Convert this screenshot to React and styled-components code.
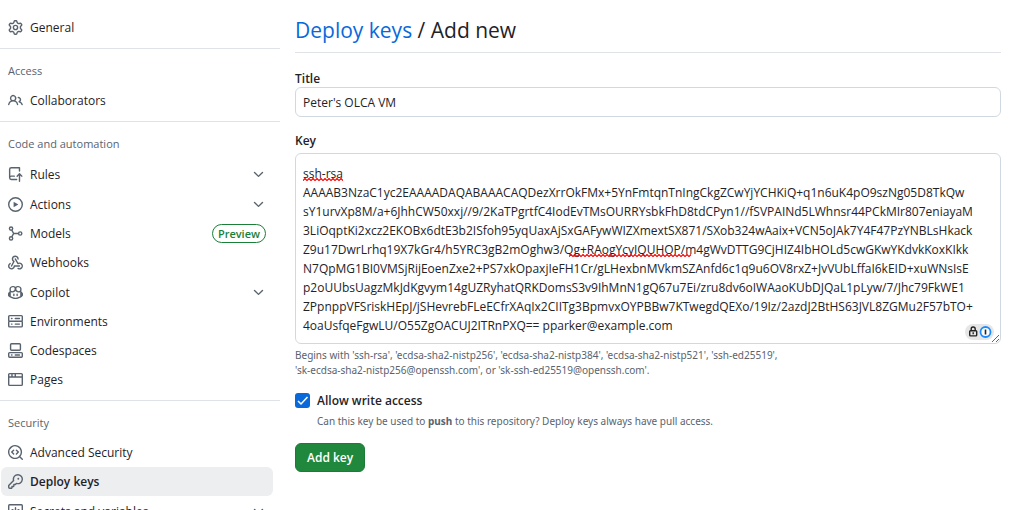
import styled, { createGlobalStyle } from 'styled-components';

const GlobalStyle = createGlobalStyle`
	* {
		box-sizing: border-box;
	}

	body {
		margin: 0;
		background-color: #ffffff;
		color: #1f2328;
		font-family: 'Segoe UI', 'Open Sans', 'Noto Sans', sans-serif;
		font-size: 12px;
		line-height: 19px;
	}

	button,
	input,
	textarea {
		color: inherit;
		font: inherit;
	}
`;

const Page = styled.div`
	display: flex;
	height: 100vh;
	overflow: hidden;
`;

const Sidebar = styled.nav`
	flex: 0 0 280px;
	padding-top: 13px;
`;

const Group = styled.section`
	& + & {
		margin-top: 6px;
		padding-top: 13px;
		border-top: 1px solid #dfe3e8;
	}
`;

const GroupTitle = styled.h3`
	margin: 0 8px 7px;
	color: #59636e;
	font-size: 11px;
	font-weight: 500;
	line-height: 17px;
`;

const List = styled.ul`
	margin: 0;
	padding: 0 7px 0 1px;
	list-style: none;
`;

const Item = styled.a`
	display: flex;
	align-items: center;
	gap: 7px;
	width: 100%;
	min-height: 29px;
	padding: 0 7px;
	border: 0;
	border-radius: 6px;
	background-color: ${(props) => (props.$active ? '#eceef0' : 'transparent')};
	color: #1f2328;
	font-weight: ${(props) => (props.$active ? 600 : 400)};
	text-align: left;
	text-decoration: none;
`;

const ExpandableItem = styled(Item)`
	min-height: 30px;
	cursor: pointer;
`;

const ItemLabel = styled.span`
	flex: 1;
`;

const Badge = styled.span`
	padding: 0 5px;
	border: 1px solid #1a7f37;
	border-radius: 10px;
	color: #1a7f37;
	font-size: 11px;
	font-weight: 600;
	line-height: 17px;
`;

const Icon = styled.svg`
	flex: none;
	width: 15px;
	height: 15px;
	fill: #59636e;
`;

const Main = styled.main`
	flex: 1;
	min-width: 0;
	padding: 14px 23px 0 15px;
`;

const Heading = styled.h2`
	margin: 0 0 17px;
	padding-bottom: 6px;
	border-bottom: 1px solid #dfe3e8;
	font-size: 21px;
	font-weight: 400;
	line-height: 32px;
`;

const HeadingLink = styled.a`
	color: #0969da;
	text-decoration: none;
`;

const Label = styled.label`
	display: block;
	font-weight: 600;
	line-height: 17px;
`;

const TextInput = styled.input`
	display: block;
	width: 100%;
	height: 30px;
	margin-bottom: 15px;
	padding: 0 7px;
	border: 1px solid #d1d9e0;
	border-radius: 6px;
	background-color: #ffffff;
`;

const KeyBox = styled.div`
	position: relative;
	margin: 4px 0;
`;

const KeyArea = styled.textarea`
	display: block;
	width: 100%;
	padding: 10px 7px 8px;
	border: 1px solid #d1d9e0;
	border-radius: 6px;
	background-color: #ffffff;
	line-height: 19px;
	white-space: pre;
	overflow: hidden;
	resize: vertical;
`;

const Squiggle = styled.svg`
	position: absolute;
	top: ${(props) => 11 + props.$line * 19 + 14}px;
	left: ${(props) => props.$left}px;
	width: ${(props) => props.$width}px;
	height: 3px;
	pointer-events: none;
`;

const VaultPill = styled.span`
	position: absolute;
	right: 7px;
	bottom: 4px;
	display: flex;
	align-items: center;
	width: 29px;
	height: 16px;
	border-radius: 8px;
	background-color: #e6e6e6;
`;

const Help = styled.p`
	margin: 0;
	color: #59636e;
	font-family: 'Segoe UI', 'Noto Sans', sans-serif;
	font-size: 10px;
	line-height: 15px;
`;

const CheckRow = styled.div`
	display: flex;
	align-items: center;
	gap: 7px;
	margin-top: 14px;
`;

const CheckBox = styled.span`
	display: grid;

	> * {
		grid-area: 1 / 1;
	}
`;

const CheckInput = styled.input`
	width: 15px;
	height: 15px;
	margin: 0;
	border-radius: 3px;
	background-color: #0969da;
	appearance: none;
`;

const Tick = styled.svg`
	width: 15px;
	height: 15px;
	fill: none;
	stroke: #ffffff;
	pointer-events: none;
`;

const CheckHelp = styled(Help)`
	margin: 5px 0 14px 22px;
`;

const SubmitButton = styled.button`
	height: 29px;
	padding: 0 11px;
	border: 1px solid #1c7b37;
	border-radius: 6px;
	background-color: #1f883d;
	color: #ffffff;
	font-weight: 600;
`;

const icons = {
	gear: 'M8 0a8.2 8.2 0 0 1 .701.031C9.444.095 9.99.645 10.16 1.29l.288 1.107c.018.066.079.158.212.224.231.114.454.243.668.386.123.082.233.09.299.071l1.103-.303c.644-.176 1.392.021 1.82.63.27.385.506.792.704 1.218.315.675.111 1.422-.364 1.891l-.814.806c-.049.048-.098.147-.088.294.016.257.016.515 0 .772-.01.147.038.246.088.294l.814.806c.475.469.679 1.216.364 1.891a7.977 7.977 0 0 1-.704 1.217c-.428.61-1.176.807-1.82.63l-1.102-.302c-.067-.019-.177-.011-.3.071a5.909 5.909 0 0 1-.668.386c-.133.066-.194.158-.211.224l-.29 1.106c-.168.646-.715 1.196-1.458 1.26a8.006 8.006 0 0 1-1.402 0c-.743-.064-1.289-.614-1.458-1.26l-.289-1.106c-.018-.066-.079-.158-.212-.224a5.738 5.738 0 0 1-.668-.386c-.123-.082-.233-.09-.299-.071l-1.103.303c-.644.176-1.392-.021-1.82-.63a8.12 8.12 0 0 1-.704-1.218c-.315-.675-.111-1.422.363-1.891l.815-.806c.05-.048.098-.147.088-.294a6.214 6.214 0 0 1 0-.772c.01-.147-.038-.246-.088-.294l-.815-.806C.635 6.045.431 5.298.746 4.623a7.92 7.92 0 0 1 .704-1.217c.428-.61 1.176-.807 1.82-.63l1.102.302c.067.019.177.011.3-.071.214-.143.437-.272.668-.386.133-.066.194-.158.211-.224l.29-1.106C6.009.645 6.556.095 7.299.03 7.53.01 7.764 0 8 0Zm-.571 1.525c-.036.003-.108.036-.137.146l-.289 1.105c-.147.561-.549.967-.998 1.189-.173.086-.34.183-.5.29-.417.278-.97.423-1.529.27l-1.103-.303c-.109-.03-.175.016-.195.045-.22.312-.412.644-.573.99-.014.031-.021.11.059.19l.815.806c.411.406.562.957.53 1.456a4.709 4.709 0 0 0 0 .582c.032.499-.119 1.05-.53 1.456l-.815.806c-.081.08-.073.159-.059.19.162.346.353.677.573.989.02.03.085.076.195.046l1.102-.303c.56-.153 1.113-.008 1.53.27.161.107.328.204.501.29.447.222.85.629.997 1.189l.289 1.105c.029.109.101.143.137.146a6.6 6.6 0 0 0 1.142 0c.036-.003.108-.036.137-.146l.289-1.105c.147-.561.549-.967.998-1.189.173-.086.34-.183.5-.29.417-.278.97-.423 1.529-.27l1.103.303c.109.029.175-.016.195-.045.22-.313.411-.644.573-.99.014-.031.021-.11-.059-.19l-.815-.806c-.411-.406-.562-.957-.53-1.456a4.709 4.709 0 0 0 0-.582c-.032-.499.119-1.05.53-1.456l.815-.806c.081-.08.073-.159.059-.19a6.464 6.464 0 0 0-.573-.989c-.02-.03-.085-.076-.195-.046l-1.102.303c-.56.153-1.113.008-1.53-.27a4.44 4.44 0 0 0-.501-.29c-.447-.222-.85-.629-.997-1.189l-.289-1.105c-.029-.11-.101-.143-.137-.146a6.6 6.6 0 0 0-1.142 0ZM11 8a3 3 0 1 1-6 0 3 3 0 0 1 6 0ZM9.5 8a1.5 1.5 0 1 0-3.001.001A1.5 1.5 0 0 0 9.5 8Z',
	people: 'M2 5.5a3.5 3.5 0 1 1 5.898 2.549 5.508 5.508 0 0 1 3.034 4.084.75.75 0 1 1-1.482.235 4 4 0 0 0-7.9 0 .75.75 0 0 1-1.482-.236A5.507 5.507 0 0 1 3.102 8.05 3.493 3.493 0 0 1 2 5.5ZM11 4a3.001 3.001 0 0 1 2.22 5.018 5.01 5.01 0 0 1 2.56 3.012.749.749 0 0 1-.885.954.752.752 0 0 1-.549-.514 3.507 3.507 0 0 0-2.522-2.372.75.75 0 0 1-.574-.73v-.352a.75.75 0 0 1 .416-.672A1.5 1.5 0 0 0 11 5.5.75.75 0 0 1 11 4Zm-5.5-.5a2 2 0 1 0-.001 3.999A2 2 0 0 0 5.5 3.5Z',
	push: 'M1 2.5A2.5 2.5 0 0 1 3.5 0h8.75a.75.75 0 0 1 .75.75v3.5a.75.75 0 0 1-1.5 0V1.5h-8a1 1 0 0 0-1 1v6.708A2.493 2.493 0 0 1 3.5 9h3.25a.75.75 0 0 1 0 1.5H3.5a1 1 0 0 0 0 2h5.75a.75.75 0 0 1 0 1.5H3.5A2.5 2.5 0 0 1 1 11.5Zm13.23 7.79h-.001l-1.224-1.224v6.184a.75.75 0 0 1-1.5 0V9.066L10.28 10.29a.75.75 0 0 1-1.06-1.061l2.505-2.504a.75.75 0 0 1 1.06 0L15.29 9.23a.751.751 0 0 1-.018 1.042.751.751 0 0 1-1.042.018Z',
	play: 'M8 0a8 8 0 1 1 0 16A8 8 0 0 1 8 0ZM1.5 8a6.5 6.5 0 1 0 13 0 6.5 6.5 0 0 0-13 0Zm4.879-2.773 4.264 2.559a.25.25 0 0 1 0 .428l-4.264 2.559A.25.25 0 0 1 6 10.559V5.442a.25.25 0 0 1 .379-.215Z',
	webhook: 'M5.5 4.25a2.25 2.25 0 0 1 4.5 0 .75.75 0 0 0 1.5 0 3.75 3.75 0 1 0-6.14 2.889l-2.272 4.258a.75.75 0 0 0 1.324.706L7 7.25a.75.75 0 0 0-.309-1.015A2.25 2.25 0 0 1 5.5 4.25ZM7.364 3.607a.75.75 0 0 1 1.03.257l2.608 4.349a3.75 3.75 0 1 1-.628 6.785.75.75 0 0 1 .752-1.299 2.25 2.25 0 1 0-.033-3.88.75.75 0 0 1-1.03-.256L7.107 4.636a.75.75 0 0 1 .257-1.03ZM2.9 8.776A.75.75 0 0 1 2.625 9.8 2.25 2.25 0 1 0 6 11.75a.75.75 0 0 1 .75-.751h5.5a.75.75 0 0 1 0 1.5H7.425a3.751 3.751 0 1 1-5.55-3.998.75.75 0 0 1 1.024.274Z',
	copilot: 'M7.998 15.035c-4.562 0-7.873-2.914-7.998-3.749V9.338c.085-.628.677-1.686 1.588-2.065.013-.07.024-.143.036-.218.029-.183.06-.384.126-.612-.201-.508-.254-1.084-.254-1.656 0-.87.128-1.769.693-2.484.579-.733 1.494-1.124 2.724-1.261 1.206-.134 2.262.034 2.944.765.05.053.096.108.139.165.044-.057.094-.112.143-.165.682-.731 1.738-.899 2.944-.765 1.23.137 2.145.528 2.724 1.261.566.715.693 1.614.693 2.484 0 .572-.053 1.148-.254 1.656.066.228.098.429.126.612.012.076.024.148.037.218.924.385 1.522 1.471 1.591 2.095v1.872c0 .766-3.351 3.795-8.002 3.795Zm0-1.485c2.28 0 4.584-1.11 5.002-1.433V7.862l-.023-.116c-.49.21-1.075.291-1.727.291-1.146 0-2.059-.327-2.71-.991A3.222 3.222 0 0 1 8 6.303a3.24 3.24 0 0 1-.544.743c-.65.664-1.563.991-2.71.991-.652 0-1.236-.081-1.727-.291l-.023.116v4.255c.419.323 2.722 1.433 5.002 1.433ZM6.762 2.83c-.193-.206-.637-.413-1.682-.297-1.019.113-1.479.404-1.713.7-.247.312-.369.789-.369 1.554 0 .793.129 1.171.308 1.371.162.181.519.379 1.442.379.853 0 1.339-.235 1.638-.54.315-.322.527-.827.617-1.553.117-.935-.037-1.395-.241-1.614Zm4.155-.297c-1.044-.116-1.488.091-1.681.297-.204.219-.359.679-.242 1.614.091.726.303 1.231.618 1.553.299.305.784.54 1.638.54.922 0 1.28-.198 1.442-.379.179-.2.308-.578.308-1.371 0-.765-.123-1.242-.37-1.554-.233-.296-.693-.587-1.713-.7ZM6.25 9.037a.75.75 0 0 1 .75.75v1.501a.75.75 0 0 1-1.5 0V9.787a.75.75 0 0 1 .75-.75Zm4.25.75v1.501a.75.75 0 0 1-1.5 0V9.787a.75.75 0 0 1 1.5 0Z',
	server: 'M1.75 1h12.5c.966 0 1.75.784 1.75 1.75v4c0 .372-.116.717-.314 1 .198.283.314.628.314 1v4a1.75 1.75 0 0 1-1.75 1.75H1.75A1.75 1.75 0 0 1 0 12.75v-4c0-.358.109-.707.314-1a1.739 1.739 0 0 1-.314-1v-4C0 1.784.784 1 1.75 1ZM1.5 2.75v4c0 .138.112.25.25.25h12.5a.25.25 0 0 0 .25-.25v-4a.25.25 0 0 0-.25-.25H1.75a.25.25 0 0 0-.25.25Zm.25 5.75a.25.25 0 0 0-.25.25v4c0 .138.112.25.25.25h12.5a.25.25 0 0 0 .25-.25v-4a.25.25 0 0 0-.25-.25ZM7 4.75A.75.75 0 0 1 7.75 4h4.5a.75.75 0 0 1 0 1.5h-4.5A.75.75 0 0 1 7 4.75ZM7.75 10h4.5a.75.75 0 0 1 0 1.5h-4.5a.75.75 0 0 1 0-1.5ZM3 4.75A.75.75 0 0 1 3.75 4h.5a.75.75 0 0 1 0 1.5h-.5A.75.75 0 0 1 3 4.75ZM3.75 10h.5a.75.75 0 0 1 0 1.5h-.5a.75.75 0 0 1 0-1.5Z',
	codespaces: 'M0 11.25c0-.966.784-1.75 1.75-1.75h12.5c.966 0 1.75.784 1.75 1.75v3A1.75 1.75 0 0 1 14.25 16H1.75A1.75 1.75 0 0 1 0 14.25Zm2-9.5C2 .784 2.784 0 3.75 0h8.5C13.216 0 14 .784 14 1.75v5a1.75 1.75 0 0 1-1.75 1.75h-8.5A1.75 1.75 0 0 1 2 6.75Zm1.75-.25a.25.25 0 0 0-.25.25v5c0 .138.112.25.25.25h8.5a.25.25 0 0 0 .25-.25v-5a.25.25 0 0 0-.25-.25Zm-2 9.5a.25.25 0 0 0-.25.25v3c0 .138.112.25.25.25h12.5a.25.25 0 0 0 .25-.25v-3a.25.25 0 0 0-.25-.25ZM7 12.75a.75.75 0 0 1 .75-.75h4.5a.75.75 0 0 1 0 1.5h-4.5a.75.75 0 0 1-.75-.75Zm-4 0a.75.75 0 0 1 .75-.75h.5a.75.75 0 0 1 0 1.5h-.5a.75.75 0 0 1-.75-.75Z',
	browser: 'M0 2.75C0 1.784.784 1 1.75 1h12.5c.966 0 1.75.784 1.75 1.75v10.5A1.75 1.75 0 0 1 14.25 15H1.75A1.75 1.75 0 0 1 0 13.25ZM14.5 6h-13v7.25c0 .138.112.25.25.25h12.5a.25.25 0 0 0 .25-.25Zm-6-3.5v2h6V2.75a.25.25 0 0 0-.25-.25ZM5 2.5v2h2v-2Zm-3.25 0a.25.25 0 0 0-.25.25V4.5h2v-2Z',
	codescan: 'M8.47 4.97a.75.75 0 0 0 0 1.06L9.94 7.5 8.47 8.97a.75.75 0 1 0 1.06 1.06l2-2a.75.75 0 0 0 0-1.06l-2-2a.75.75 0 0 0-1.06 0ZM6.53 6.03a.75.75 0 0 0-1.06-1.06l-2 2a.75.75 0 0 0 0 1.06l2 2a.75.75 0 1 0 1.06-1.06L5.06 7.5l1.47-1.47ZM12.246 13.307a7.501 7.501 0 1 1 1.06-1.06l2.474 2.473a.749.749 0 0 1-.326 1.275.749.749 0 0 1-.734-.215ZM1.5 7.5a6.002 6.002 0 0 0 3.608 5.504 6.002 6.002 0 0 0 6.486-1.117.748.748 0 0 1 .292-.293A6 6 0 1 0 1.5 7.5Z',
	key: 'M10.5 0a5.499 5.499 0 1 1-1.288 10.848l-.932.932a.749.749 0 0 1-.53.22H7v.75a.749.749 0 0 1-.22.53l-.5.5a.749.749 0 0 1-.53.22H5v.75a.749.749 0 0 1-.22.53l-.5.5a.749.749 0 0 1-.53.22h-2A1.75 1.75 0 0 1 0 14.25v-2c0-.199.079-.389.22-.53l4.932-4.932A5.5 5.5 0 0 1 10.5 0Zm-4 5.5c-.001.431.069.86.205 1.269a.75.75 0 0 1-.181.768L1.5 12.56v1.69c0 .138.112.25.25.25h1.69l.06-.06v-1.19a.75.75 0 0 1 .75-.75h1.19l.06-.06v-1.19a.75.75 0 0 1 .75-.75h1.19l1.023-1.025a.75.75 0 0 1 .768-.18A4 4 0 1 0 6.5 5.5ZM11 6a1 1 0 1 1 0-2 1 1 0 0 1 0 2Z',
	chevron: 'M12.78 5.22a.749.749 0 0 1 0 1.06l-4.25 4.25a.749.749 0 0 1-1.06 0L3.22 6.28a.749.749 0 1 1 1.06-1.06L8 8.939l3.72-3.719a.749.749 0 0 1 1.06 0Z',
};

// These two are simpler as strokes than as outlines
const strokeIcons = {
	model: (
		<g fill="none" stroke="#59636e" strokeWidth="1.5">
			<circle cx="3.25" cy="2.75" r="1.75" />
			<circle cx="3.25" cy="13.25" r="1.75" />
			<circle cx="13" cy="8" r="1.75" />
			<path d="M4 4.5 6 8l-2 3.5M6 8h5.25" />
		</g>
	),
	asterisk: (
		<g fill="none" stroke="#59636e" strokeWidth="1.5" strokeLinecap="round">
			<rect x=".75" y=".75" width="14.5" height="14.5" rx="1" />
			<path d="M8 4v8M4.5 6l7 4M11.5 6l-7 4" />
		</g>
	),
};

const groups = [
	{
		items: [{ icon: 'gear', label: 'General' }],
	},
	{
		title: 'Access',
		items: [{ icon: 'people', label: 'Collaborators' }],
	},
	{
		title: 'Code and automation',
		items: [
			{ icon: 'push', label: 'Rules', expandable: true },
			{ icon: 'play', label: 'Actions', expandable: true },
			{ icon: 'model', label: 'Models', badge: 'Preview' },
			{ icon: 'webhook', label: 'Webhooks' },
			{ icon: 'copilot', label: 'Copilot', expandable: true },
			{ icon: 'server', label: 'Environments' },
			{ icon: 'codespaces', label: 'Codespaces' },
			{ icon: 'browser', label: 'Pages' },
		],
	},
	{
		title: 'Security',
		items: [
			{ icon: 'codescan', label: 'Advanced Security' },
			{ icon: 'key', label: 'Deploy keys', active: true },
			{ icon: 'asterisk', label: 'Secrets and variables', expandable: true },
		],
	},
];

const keyLines = [
	'ssh-rsa',
	'AAAAB3NzaC1yc2EAAAADAQABAAACAQDezXrrOkFMx+5YnFmtqnTnIngCkgZCwYjYCHKiQ+q1n6uK4pO9szNg05D8TkQw',
	'sY1urvXp8M/a+6JhhCW50xxj//9/2KaTPgrtfC4IodEvTMsOURRYsbkFhD8tdCPyn1//fSVPAINd5LWhnsr44PCkMIr807eniayaM',
	'3LiOqptKi2xcz2EKOBx6dtE3b2ISfoh95yqUaxAjSxGAFywWIZXmextSX871/SXob324wAaix+VCN5oJAk7Y4F47PzYNBLsHkack',
	'Z9u17DwrLrhq19X7kGr4/h5YRC3gB2mOghw3/Qg+RAogYcyIQUHOP/m4gWvDTTG9CjHIZ4IbHOLd5cwGKwYKdvkKoxKIkk',
	'N7QpMG1BI0VMSjRijEoenZxe2+PS7xkOpaxjIeFH1Cr/gLHexbnMVkmSZAnfd6c1q9u6OV8rxZ+JvVUbLffaI6kEID+xuWNsIsE',
	'p2oUUbsUagzMkJdKgvym14gUZRyhatQRKDomsS3v9IhMnN1gQ67u7Ei/zru8dv6oIWAaoKUbDJQaL1pLyw/7/Jhc79FkWE1',
	'ZPpnppVFSriskHEpJ/jSHevrebFLeECfrXAqIx2CIITg3BpmvxOYPBBw7KTwegdQEXo/19Iz/2azdJ2BtHS63JVL8ZGMu2F57bTO+',
	'4oaUsfqeFgwLU/O55ZgOACUJ2ITRnPXQ== pparker@example.com',
];

const ItemIcon = ({ name }) => (
	<Icon viewBox="0 0 16 16" aria-hidden="true">
		{strokeIcons[name] || <path d={icons[name]} />}
	</Icon>
);

const SidebarItem = ({ item }) => {
	if (item.expandable) {
		return (
			<ExpandableItem as="button" type="button" aria-expanded="false">
				<ItemIcon name={item.icon} />
				<ItemLabel>{item.label}</ItemLabel>
				<ItemIcon name="chevron" />
			</ExpandableItem>
		);
	}

	return (
		<Item
			href="#"
			$active={item.active}
			aria-current={item.active ? 'page' : undefined}
		>
			<ItemIcon name={item.icon} />
			<ItemLabel>{item.label}</ItemLabel>
			{item.badge && <Badge>{item.badge}</Badge>}
		</Item>
	);
};

const SpellingMark = ({ id, line, left, width }) => (
	<Squiggle $line={line} $left={left} $width={width} aria-hidden="true">
		<defs>
			<pattern id={id} width="4" height="3" patternUnits="userSpaceOnUse">
				<path
					d="M-1 3.5 2 .5l3 3"
					fill="none"
					stroke="#ff0000"
					strokeWidth="1.2"
				/>
			</pattern>
		</defs>
		<rect width="100%" height="3" fill={`url(#${id})`} />
	</Squiggle>
);

const App = () => {
	return (
		<>
			<GlobalStyle />
			<Page>
				<Sidebar aria-label="Settings">
					{groups.map((group, i) => (
						<Group key={i}>
							{group.title && <GroupTitle>{group.title}</GroupTitle>}
							<List>
								{group.items.map((item) => (
									<li key={item.label}>
										<SidebarItem item={item} />
									</li>
								))}
							</List>
						</Group>
					))}
				</Sidebar>
				<Main>
					<Heading>
						<HeadingLink href="#">Deploy keys</HeadingLink> / Add new
					</Heading>
					<form onSubmit={(e) => e.preventDefault()}>
						<Label htmlFor="title">Title</Label>
						<TextInput id="title" type="text" defaultValue="Peter's OLCA VM" />
						<Label htmlFor="key">Key</Label>
						<KeyBox>
							<KeyArea
								id="key"
								rows={9}
								spellCheck={false}
								defaultValue={keyLines.join('\n')}
							/>
							<SpellingMark id="mark-type" line={0} left={8} width={40} />
							<SpellingMark id="mark-key" line={4} left={274} width={122} />
							<VaultPill>
								<svg width="29" height="16" viewBox="0 0 29 16" aria-hidden="true">
									<g fill="none" stroke="#222222" strokeWidth="1.4">
										<rect x="4.7" y="6.7" width="7" height="5.2" rx=".8" />
										<path d="M6.2 6.5V5a2 2 0 0 1 4 0v1.5M8.2 8.3v2" />
									</g>
									<circle
										cx="20.5"
										cy="8"
										r="5"
										fill="#ffffff"
										stroke="#1a8cff"
										strokeWidth="1.8"
									/>
									<path d="M20.5 5.5v5" stroke="#222222" strokeWidth="1.6" />
								</svg>
							</VaultPill>
						</KeyBox>
						<Help>
							Begins with 'ssh-rsa', 'ecdsa-sha2-nistp256', 'ecdsa-sha2-nistp384',
							'ecdsa-sha2-nistp521', 'ssh-ed25519',
							<br />
							'sk-ecdsa-sha2-nistp256@openssh.com', or
							'sk-ssh-ed25519@openssh.com'.
						</Help>
						<CheckRow>
							<CheckBox>
								<CheckInput
									id="write"
									type="checkbox"
									defaultChecked
									aria-describedby="write-help"
								/>
								<Tick viewBox="0 0 15 15" aria-hidden="true">
									<path d="m3 8 3 3 6.5-7" strokeWidth="1.5" />
								</Tick>
							</CheckBox>
							<Label htmlFor="write">Allow write access</Label>
						</CheckRow>
						<CheckHelp id="write-help">
							Can this key be used to <strong>push</strong> to this repository?
							Deploy keys always have pull access.
						</CheckHelp>
						<SubmitButton type="submit">Add key</SubmitButton>
					</form>
				</Main>
			</Page>
		</>
	);
};

export default App;
